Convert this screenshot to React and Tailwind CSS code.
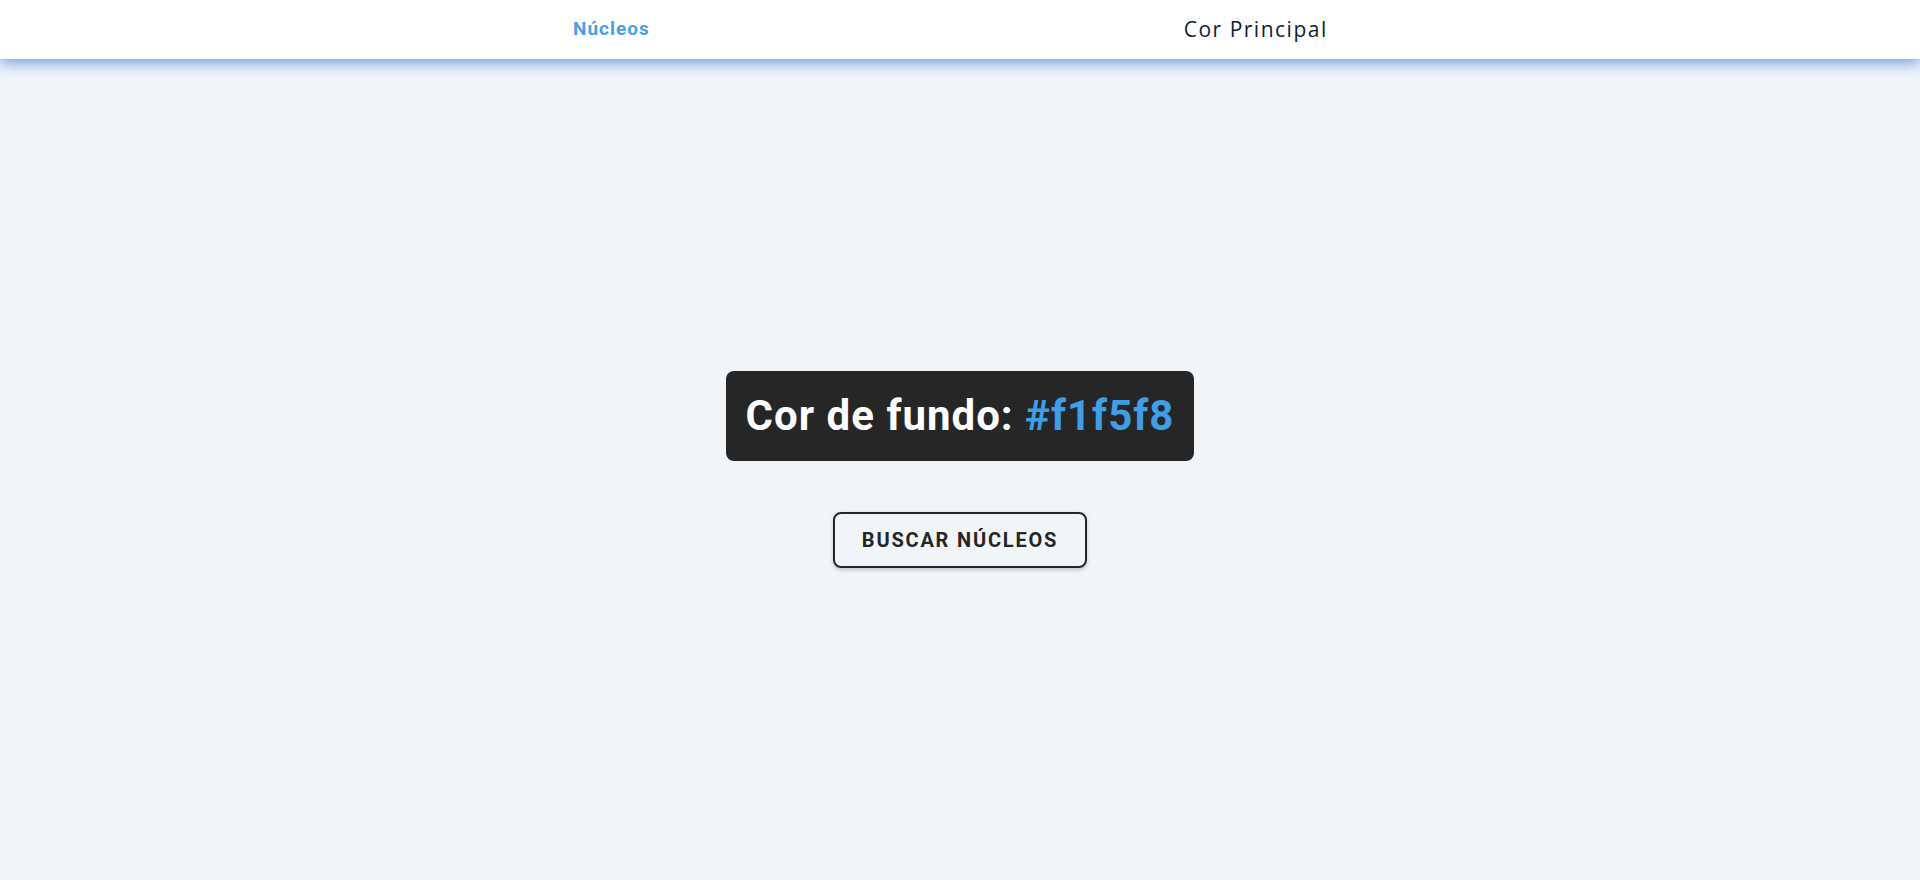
export default function App() {
  return (
    <div className="min-h-screen flex flex-col bg-[#f1f5f8]">
      <header className="relative z-10 h-[59px] bg-white shadow-[0_4px_14px_rgba(70,125,215,0.75)] flex items-center">
        <nav className="flex items-center w-full">
          <a className="ml-[573px] font-['Roboto',sans-serif] font-bold text-[19px] tracking-[1px] text-[#4a9fe6]">
            Núcleos
          </a>
          <a className="ml-[534px] font-['Open_Sans',sans-serif] text-[21px] tracking-[1.5px] leading-none text-[#0b1f33]">
            Cor Principal
          </a>
        </nav>
      </header>

      <main className="flex-1 flex flex-col items-center justify-center">
        <div className="bg-[#262626] rounded-lg px-5 py-5 font-['Roboto',sans-serif] font-bold text-[42px] leading-[50px] tracking-[1px] text-white">
          Cor de fundo: <span className="text-[#3f9fe6]">#f1f5f8</span>
        </div>
        <button className="mt-[51px] h-[56px] w-[254px] border-2 border-[#262626] rounded-lg shadow-[0_2px_4px_rgba(0,0,0,0.2)] font-['Roboto',sans-serif] font-bold text-[20px] tracking-[1.8px] text-[#262626]">
          BUSCAR NÚCLEOS
        </button>
      </main>
    </div>
  )
}
